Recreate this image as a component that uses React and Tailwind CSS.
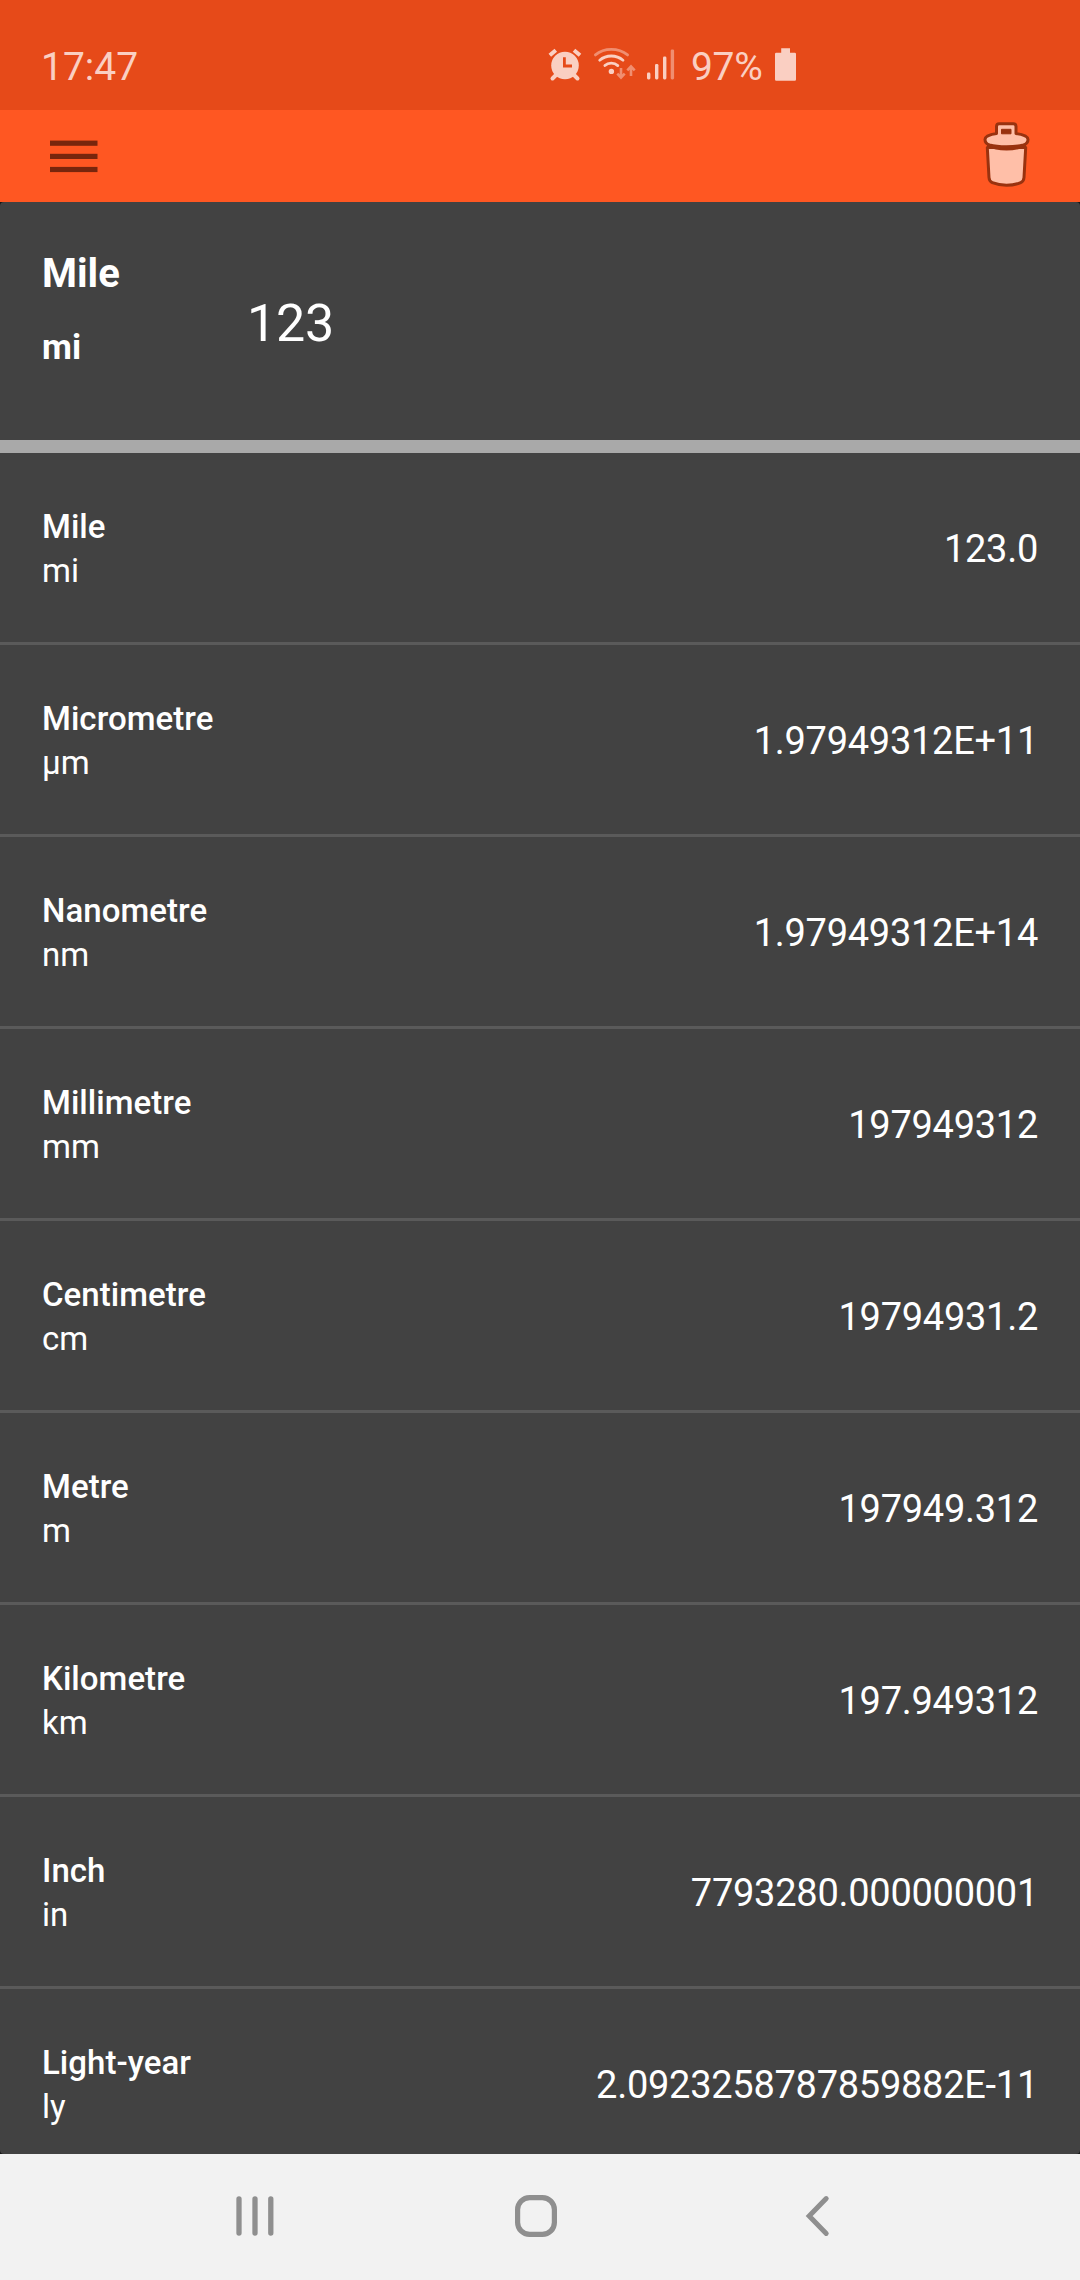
const rows = [
  ['Mile', 'mi', '123.0'],
  ['Micrometre', 'µm', '1.97949312E+11'],
  ['Nanometre', 'nm', '1.97949312E+14'],
  ['Millimetre', 'mm', '197949312'],
  ['Centimetre', 'cm', '19794931.2'],
  ['Metre', 'm', '197949.312'],
  ['Kilometre', 'km', '197.949312'],
  ['Inch', 'in', '7793280.000000001'],
  ['Light-year', 'ly', '2.0923258787859882E-11'],
];

function AlarmIcon() {
  return (
    <svg className="h-[40px] w-[38px]" viewBox="546 46 38 40" fill="none">
      <path d="M549.8 55.2l6-5M580 55.2l-6-5" stroke="#facfc2" strokeWidth="4" />
      <path d="M556.5 74.5l-4 4M573.5 74.5l4 4" stroke="#facfc2" strokeWidth="4" strokeLinecap="round" />
      <circle cx="565" cy="65.5" r="13.8" fill="#facfc2" />
      <path d="M564.4 57.3v8.7h7.6" stroke="#e64a19" strokeWidth="2.8" />
    </svg>
  );
}

function WifiIcon() {
  return (
    <svg className="ml-[8px] h-[40px] w-[46px]" viewBox="592 46 46 40" fill="none">
      <g strokeWidth="2.8" strokeLinecap="round">
        <path d="M595.4 54.9Q602 49.4 611.3 49.4T627.6 54.9" stroke="#f08e70" />
        <path d="M599.7 60.2Q604.6 56 611.3 56T623 60.2" stroke="#facfc2" />
        <path d="M604.9 65.6Q607.4 63.2 611.3 63.2T617.8 65.6" stroke="#facfc2" />
      </g>
      <circle cx="611.4" cy="71.4" r="2.7" fill="#facfc2" />
      <path d="M621 68v9.3M617.3 73.6l3.7 4 3.7-4M631 76V66.7M627.3 70.4l3.7-4 3.7 4" stroke="#f08e70" strokeWidth="2.6" />
    </svg>
  );
}

function SignalIcon() {
  return (
    <svg className="ml-[6px] h-[40px] w-[32px]" viewBox="644 46 32 40" fill="#facfc2">
      <rect x="647" y="72.6" width="3.4" height="6.8" rx="1.3" />
      <rect x="655" y="64" width="3.4" height="15.4" rx="1.3" />
      <rect x="663" y="56.5" width="3.4" height="22.9" rx="1.3" />
      <rect x="670.7" y="49.4" width="3.4" height="30" rx="1.3" fill="#f08e70" />
    </svg>
  );
}

function BatteryIcon() {
  return (
    <svg className="h-[40px] w-[24px]" viewBox="773 46 24 40" fill="#facfc2">
      <path d="M781.2 48.3h8.8v4.5h4.8q1.2 0 1.2 1.2v25.5q0 1.2-1.2 1.2h-18.6q-1.2 0-1.2-1.2V54q0-1.2 1.2-1.2h5z" />
    </svg>
  );
}

function TrashIcon() {
  return (
    <svg className="h-[70px] w-[50px]" viewBox="981 120 50 70" fill="#ffbfa8" stroke="#99320f" strokeWidth="3" strokeLinejoin="round">
      <path d="M987.3 147.5l1.7 30q.3 4 3.3 5.2 6.500 2.600 14.200 2.600t14.200-2.600q3-1.200 3.300-5.200l1.700-30z" />
      <path d="M987 146.500q8 4 19.500 4t19.500-4v-3h-39z" fill="#99320f" stroke="none" />
      <path d="M996.500 133.500v-7q0-2.800 2.800-2.800h13.900q2.800 0 2.800 2.800v7q12 1.700 12 6 0 4-4.500 5.500-6.500 1.800-17 1.800t-17-1.800q-4.500-1.500-4.500-5.500 0-4.300 11.500-6z" />
      <rect x="1001.500" y="129.300" width="9.500" height="4.500" fill="#99320f" stroke="#99320f" strokeWidth="1" />
    </svg>
  );
}

export default function App() {
  return (
    <div className="flex h-[2280px] w-[1080px] flex-col overflow-hidden bg-[#161616] font-['Roboto',sans-serif] text-white">
      <header className="flex h-[110px] shrink-0 items-start bg-[#e64a19] pl-[41px] pt-[46px] text-[#facfc2]">
        <span className="w-[505px] text-[39px] leading-[42px]">17:47</span>
        <AlarmIcon />
        <WifiIcon />
        <SignalIcon />
        <span className="ml-[15px] w-[82px] text-[39px] leading-[42px] tracking-[-0.3px]">97%</span>
        <BatteryIcon />
      </header>
      <div className="flex h-[92px] shrink-0 items-start justify-between bg-[#ff5722] pl-[50px] pr-[49px] pt-[10px]">
        <svg className="mt-[20px] h-[34px] w-[48px]" viewBox="0 0 48 34" fill="#78260d">
          <rect y="0.6" width="47.5" height="5.2" />
          <rect y="13.8" width="47.5" height="5.2" />
          <rect y="26.9" width="47.5" height="5.2" />
        </svg>
        <TrashIcon />
      </div>
      <div className="flex min-h-0 flex-1 flex-col overflow-hidden rounded-[4px] bg-[#424242]">
        <section className="flex h-[238px] shrink-0">
          <div className="w-[247px] pl-[42px] pt-[50px]">
            <div className="text-[40px] font-bold leading-[44px]">Mile</div>
            <div className="mt-[31px] text-[34.5px] font-bold leading-[40px]">mi</div>
          </div>
          <div className="pt-[92px] text-[52px] leading-[60px] tracking-[-0.2px]">123</div>
        </section>
        <div className="h-[13px] shrink-0 bg-[#a9a9a9]" />
        <main className="min-h-0 flex-1 overflow-hidden">
          {rows.map(([name, unit, value]) => (
            <div key={name} className="flex h-[192px] items-center justify-between border-b-[3px] border-[#5a5a5a] px-[42px]">
              <div className="pt-[2px] text-[33px] leading-[44px]">
                <div className="font-medium tracking-[0.05px]">{name}</div>
                <div>{unit}</div>
              </div>
              <div className="pt-[4px] text-[38px] tracking-[-0.27px]">{value}</div>
            </div>
          ))}
        </main>
      </div>
      <nav className="flex h-[126px] shrink-0 items-start bg-[#f2f2f2] pl-[234px] pt-[40px]">
        <svg className="h-[44px] w-[42px]" viewBox="234 2194 42 44" stroke="#8f8f8f" strokeWidth="5.3" strokeLinecap="round">
          <path d="M239 2198.8v34.3M255 2198.8v34.3M270.8 2198.8v34.3" />
        </svg>
        <svg className="ml-[237px] h-[44px] w-[46px]" viewBox="513 2194 46 44" fill="none" stroke="#8f8f8f" strokeWidth="5.2">
          <rect x="517.6" y="2197.6" width="36.8" height="36.8" rx="12" />
        </svg>
        <svg className="ml-[245px] h-[44px] w-[28px]" viewBox="804 2194 28 44" fill="none" stroke="#8f8f8f" strokeWidth="5" strokeLinecap="round">
          <path d="M826.2 2198.6L809.2 2216l17 17.4" />
        </svg>
      </nav>
    </div>
  );
}
